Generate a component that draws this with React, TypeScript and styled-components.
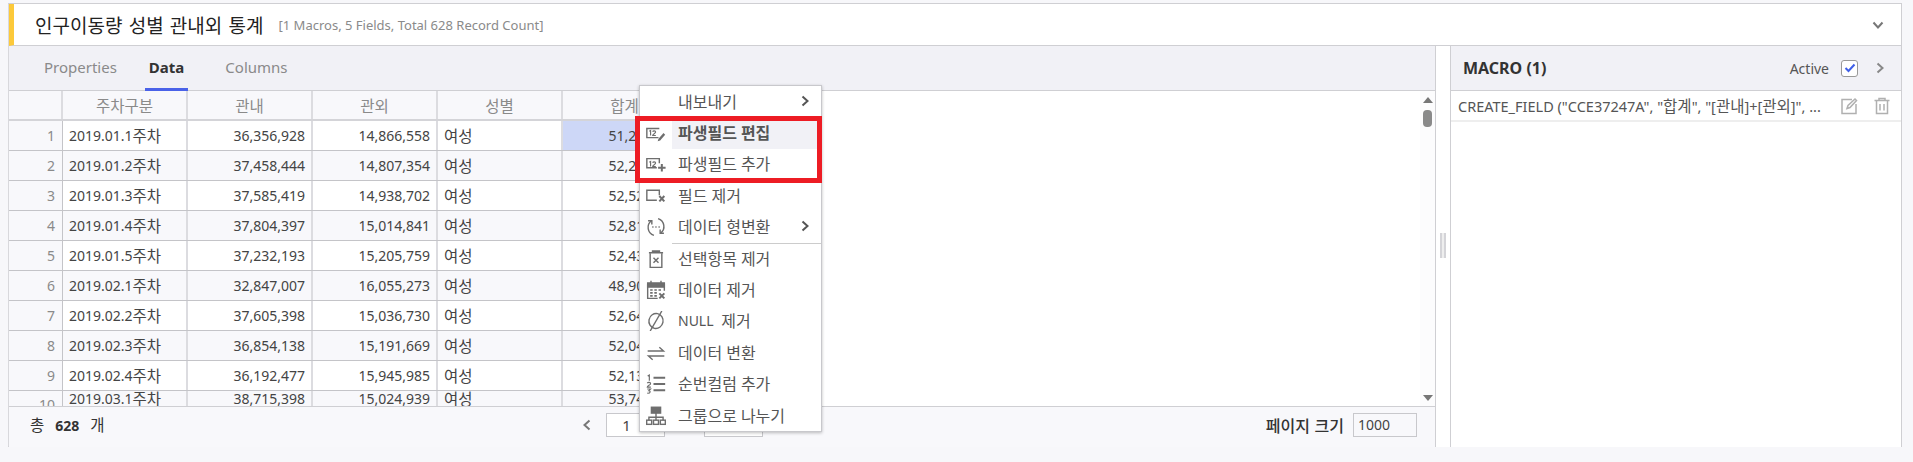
import React from "react";
import styled, { createGlobalStyle } from "styled-components";

const GlobalStyle = createGlobalStyle`
  * { box-sizing: border-box; }
  html, body { margin: 0; padding: 0; height: 100%; background: #f7f7fa; overflow: hidden; }
  body { font-family: "Noto Sans", "Noto Sans CJK KR", sans-serif; font-size: 14px; color: #444; }
`;

const rows = [
  ["2019.01.1주차", 36356928, 14866558],
  ["2019.01.2주차", 37458444, 14807354],
  ["2019.01.3주차", 37585419, 14938702],
  ["2019.01.4주차", 37804397, 15014841],
  ["2019.01.5주차", 37232193, 15205759],
  ["2019.02.1주차", 32847007, 16055273],
  ["2019.02.2주차", 37605398, 15036730],
  ["2019.02.3주차", 36854138, 15191669],
  ["2019.02.4주차", 36192477, 15945985],
  ["2019.03.1주차", 38715398, 15024939],
] as [string, number, number][];

// 한글만 글자 크기를 따로 준다
function Mixed({ children }: { children: string }) {
  return (
    <>
      {children.split(/([가-힣]+)/).map((part, i) =>
        /[가-힣]/.test(part) ? <Ko key={i}>{part}</Ko> : part
      )}
    </>
  );
}

const IconBox = styled.svg`
  display: block;
  fill: none;
  stroke: #6e6e6e;
  stroke-width: 1.7;
`;

const Twelve = () => (
  <path d="M4 10l1.500-1v6M8 10.500c.5-1.500 3.500-1.500 3.500.4 0 1.600-3.500 2.300-3.500 4.100h3.800" strokeWidth="1.400" />
);

const menuIcons: React.ReactNode[] = [
  null,
  <>
    <path d="M16 6.500H1v11h14" />
    <Twelve />
    <path d="M15 19l6-7 2 2-6 7-3 .8z" fill="#6e6e6e" stroke="none" />
  </>,
  <>
    <path d="M16 11V5.500H1v11h12" />
    <Twelve />
    <path d="M19 12v9M14.500 16.500h9" strokeWidth="2.400" />
  </>,
  <>
    <path d="M16 11V5H1v12h12" />
    <path d="M16 12l6 6.500M22 12l-6 6.500" strokeWidth="2.400" />
  </>,
  <>
    <path d="M9.500 22A10 10 0 0 1 6.500 4.500" />
    <path d="M2.500 4.500h4.500V9" />
    <path d="M14.500 2A10 10 0 0 1 17.500 19.500" />
    <path d="M21.500 19.500H17V15" />
    <path d="M7.500 12h1.500M11.200 12h1.500M15 12h1.500" strokeWidth="2" />
  </>,
  <>
    <path d="M3.500 4.500h17M8 4.500V2.500h8v2" strokeWidth="2" />
    <path d="M5 5v17h14V5" />
    <path d="M9 10.500l6 6M15 10.500l-6 6" />
  </>,
  <>
    <path d="M2 5h20v8M2 5v17h12" />
    <path d="M2 3.500h20v5H2z" fill="#6e6e6e" />
    <path d="M6 1v3M18 1v3" />
    <path d="M5 12h3M10 12h3M15 12h3M5 15.500h3M10 15.500h3M5 19h3M10 19h3" strokeWidth="2" />
    <path d="M16 16l6 6M22 16l-6 6" strokeWidth="2.400" />
  </>,
  <>
    <ellipse cx="12" cy="12" rx="8.500" ry="9" transform="rotate(12 12 12)" />
    <path d="M5 24L19 0" />
  </>,
  <>
    <path d="M2 9.500h19l-5-4.500" />
    <path d="M22 15.500H3l5 4.500" />
  </>,
  <>
    <path d="M9 4.500h14M9 12h14M9 19.500h14" strokeWidth="2.200" />
    <path d="M2 2.500l2-1.200V8M1.500 11c1-1.400 4-1.200 4 .6s-4 2.300-4 4.200h4.300M1.500 18h4l-2 2c2 0 2.300 3.500-2 3" strokeWidth="1.400" />
  </>,
  <>
    <rect x="6.500" y="1.500" width="11" height="7" fill="#6e6e6e" />
    <path d="M12 8.500v5M3.500 17v-3.500h17V17M12 13.500V17" />
    <rect x=".8" y="17" width="6" height="5" />
    <rect x="9" y="17" width="6" height="5" />
    <rect x="17.200" y="17" width="6" height="5" />
  </>,
];

const menuItems = [
  { label: "내보내기", arrow: true },
  { label: "파생필드 편집", bold: true, active: true },
  { label: "파생필드 추가" },
  { label: "필드 제거" },
  { label: "데이터 형변환", arrow: true },
  { label: "선택항목 제거", line: true },
  { label: "데이터 제거" },
  { label: "NULL 제거" },
  { label: "데이터 변환" },
  { label: "순번컬럼 추가" },
  { label: "그룹으로 나누기" },
];

const Chevron = ({ dir, color = "#777" }: { dir: "left" | "right" | "down"; color?: string }) => {
  const d = { left: "M9.500 2.500L4.500 7l5 4.500", right: "M4.500 2.500L9.500 7l-5 4.500", down: "M2.500 4.500L7 9.500l4.500-5" }[dir];
  return (
    <svg width="14" height="14" viewBox="0 0 14 14" fill="none" stroke={color} strokeWidth="2">
      <path d={d} />
    </svg>
  );
};

export default function App() {
  return (
    <Frame>
      <GlobalStyle />
      <TitleBar>
        <Title>인구이동량 성별 관내외 통계</Title>
        <Summary>[1 Macros, 5 Fields, Total 628 Record Count]</Summary>
        <TitleToggle>
          <Chevron dir="down" />
        </TitleToggle>
      </TitleBar>
      <Body>
        <DataPane>
          <Tabs>
            <Tab>Properties</Tab>
            <Tab $active>Data</Tab>
            <Tab $last>Columns</Tab>
          </Tabs>
          <TableArea>
            <Grid>
              <HeadRow>
                <HeadCell />
                <HeadCell>주차구분</HeadCell>
                <HeadCell>관내</HeadCell>
                <HeadCell>관외</HeadCell>
                <HeadCell>성별</HeadCell>
                <HeadCell>합계</HeadCell>
              </HeadRow>
              {rows.map(([week, inner, outer], i) => (
                <DataRow key={week} $even={i % 2 === 1} $clipped={i === 9}>
                  <NumCell $clipped={i === 9}>{i + 1}</NumCell>
                  <Cell>
                    <Mixed>{week}</Mixed>
                  </Cell>
                  <Cell $right>{inner.toLocaleString("en-US")}</Cell>
                  <Cell $right>{outer.toLocaleString("en-US")}</Cell>
                  <Cell>
                    <Ko>여성</Ko>
                  </Cell>
                  <Cell $right $selected={i === 0}>
                    {(inner + outer).toLocaleString("en-US")}
                  </Cell>
                </DataRow>
              ))}
            </Grid>
            <ScrollBar>
              <ArrowUp />
              <Thumb />
              <ArrowDown />
            </ScrollBar>
          </TableArea>
          <Footer>
            <Total>
              <Ko>총</Ko>
              <b>628</b>
              <Ko>개</Ko>
            </Total>
            <Pager>
              <Chevron dir="left" />
              <PageBox>1</PageBox>
              <PageSlash>/</PageSlash>
              <PageBox />
            </Pager>
            <PageSize>
              <PageSizeLabel>페이지 크기</PageSizeLabel>
              <SizeBox>1000</SizeBox>
            </PageSize>
          </Footer>
        </DataPane>
        <Splitter>
          <Grip />
        </Splitter>
        <MacroPane>
          <MacroHead>
            <MacroTitle>MACRO (1)</MacroTitle>
            <ActiveLabel>Active</ActiveLabel>
            <CheckBox>
              <svg width="12" height="12" viewBox="0 0 12 12" fill="none" stroke="#3f5fe8" strokeWidth="2">
                <path d="M1.500 6l3 3 6-6.500" />
              </svg>
            </CheckBox>
            <Chevron dir="right" color="#888" />
          </MacroHead>
          <MacroRow>
            <MacroText>
              <Mixed>{'CREATE_FIELD ("CCE37247A", "합계", "[관내]+[관외]", ...'}</Mixed>
            </MacroText>
            <RowIcon width="18" height="18" viewBox="0 0 18 18">
              <path d="M12 2.500H2v14h14V7" />
              <path d="M7 11.500l1-3 7-6.500 1.500 1.500-6.500 7z" />
            </RowIcon>
            <RowIcon width="18" height="18" viewBox="0 0 18 18">
              <path d="M1.500 3.500h15M6 3.500V1.500h6v2M3.500 3.500v13h11v-13M7 7v6.500M11 7v6.500" />
            </RowIcon>
          </MacroRow>
        </MacroPane>
      </Body>
      <Menu>
        {menuItems.map((item, i) => (
          <MenuItem key={item.label} $line={item.line}>
            <MenuIcon>
              {menuIcons[i] && (
                <IconBox width="20" height="20" viewBox="0 0 24 24">
                  {menuIcons[i]}
                </IconBox>
              )}
            </MenuIcon>
            <MenuLabel $bold={item.bold} $active={item.active}>
              <Mixed>{item.label}</Mixed>
              {item.arrow && (
                <MenuArrow>
                  <Chevron dir="right" color="#555" />
                </MenuArrow>
              )}
            </MenuLabel>
          </MenuItem>
        ))}
        <Highlight />
      </Menu>
    </Frame>
  );
}

const Ko = styled.span`
  font-family: "Noto Sans CJK KR", sans-serif;
  font-size: 15.5px;
  line-height: 1;
`;

const Frame = styled.div`
  position: relative;
  width: 1894px;
  height: 444px;
  margin: 3px 0 0 8px;
  border: 1px solid #cfcfd3;
  border-left-color: #d8d8dc;
  background: #fff;
`;

const TitleBar = styled.header`
  display: flex;
  align-items: center;
  height: 42px;
  padding: 0 16px 0 21px;
  border-left: 5px solid #fcc93a;
  border-bottom: 1px solid #cfcfd3;
  background: #fff;
`;

const Title = styled.h1`
  margin: 0;
  font-family: "Noto Sans CJK KR", sans-serif;
  font-size: 19px;
  font-weight: 400;
  word-spacing: 2px;
  color: #222;
`;

const Summary = styled.span`
  margin-left: 15px;
  font-size: 13px;
  color: #8a8a8a;
`;

const TitleToggle = styled.span`
  margin-left: auto;
  display: flex;
`;

const Body = styled.div`
  display: flex;
  height: 401px;
`;

const DataPane = styled.section`
  display: flex;
  flex-direction: column;
  width: 1427px;
  border-right: 1px solid #cfcfd3;
  background: #f8f8fb;
`;

const Tabs = styled.nav`
  display: flex;
  gap: 32px;
  height: 45px;
  padding-left: 35px;
  border-bottom: 1px solid #cfcfd3;
  background: #f1f1f6;
`;

const Tab = styled.span<{ $active?: boolean; $last?: boolean }>`
  display: flex;
  align-items: center;
  height: 45px;
  padding: 0 ${({ $active }) => ($active ? "4px" : "0")};
  margin: 0 ${({ $active }) => ($active ? "-4px" : "0")};
  margin-left: ${({ $last, $active }) => ($last ? "9px" : $active ? "-4px" : "0")};
  font-size: 15px;
  font-weight: ${({ $active }) => ($active ? 700 : 400)};
  color: ${({ $active }) => ($active ? "#333" : "#8a8a8a")};
  border-bottom: 3px solid ${({ $active }) => ($active ? "#4a62e8" : "transparent")};
`;

const TableArea = styled.div`
  display: flex;
  height: 316px;
  border-bottom: 1px solid #cfcfd3;
  background: #fff;
`;

const Grid = styled.div`
  flex: 1;
  overflow: hidden;
`;

const columns = "54px repeat(5, 125px)";

const HeadRow = styled.div`
  display: grid;
  grid-template-columns: ${columns};
  width: 679px;
  height: 30px;
  background: #f8f8fb;
  border-bottom: 2px solid #d4d4d8;
`;

const HeadCell = styled.div`
  display: flex;
  align-items: center;
  justify-content: center;
  font-family: "Noto Sans CJK KR", sans-serif;
  font-size: 15.5px;
  color: #8a8a8a;
  border-right: 2px solid #dcdce0;
`;

const DataRow = styled.div<{ $even: boolean; $clipped: boolean }>`
  display: grid;
  grid-template-columns: ${columns};
  grid-template-rows: ${({ $clipped }) => ($clipped ? "15px" : "29px")};
  width: 679px;
  height: ${({ $clipped }) => ($clipped ? "16px" : "30px")};
  background: ${({ $even }) => ($even ? "#f8f8fb" : "#fff")};
  border-bottom: ${({ $clipped }) => ($clipped ? "0" : "1px solid #c4c4c8")};
  overflow: hidden;
`;

// 잘린 마지막 행은 번호만 아래로 밀려 있다
const NumCell = styled.div<{ $clipped: boolean }>`
  display: flex;
  align-items: center;
  justify-content: flex-end;
  height: ${({ $clipped }) => ($clipped ? "26px" : "auto")};
  padding-right: 7px;
  color: #8a8a8a;
  background: #f8f8fb;
  border-right: 1px solid #c4c4c8;
`;

const Cell = styled.div<{ $right?: boolean; $selected?: boolean }>`
  display: flex;
  align-items: center;
  justify-content: ${({ $right }) => ($right ? "flex-end" : "flex-start")};
  padding: 0 6px;
  white-space: nowrap;
  overflow: hidden;
  background: ${({ $selected }) => ($selected ? "#cdd7f7" : "transparent")};
  border-right: 2px solid #dcdce0;
`;

const ScrollBar = styled.div`
  display: flex;
  flex-direction: column;
  align-items: center;
  width: 15px;
  padding: 6px 0 5px;
  background: #fcfcfd;
`;

const ArrowUp = styled.span`
  border: 5px solid transparent;
  border-top: 0;
  border-bottom: 6px solid #777;
  margin-left: 1px;
`;

const ArrowDown = styled.span`
  margin-top: auto;
  border: 5px solid transparent;
  border-bottom: 0;
  border-top: 6px solid #777;
`;

const Thumb = styled.span`
  width: 9px;
  height: 17px;
  margin-top: 7px;
  border-radius: 4px;
  background: #8a8a8a;
`;

const Footer = styled.footer`
  display: flex;
  align-items: center;
  flex: 1;
  padding: 0 18px 4px 21px;
  background: #f8f8fb;
`;

const Total = styled.div`
  display: flex;
  align-items: center;
  gap: 11px;
  width: 550px;
  color: #333;

  b {
    font-weight: 700;
  }
`;

const Pager = styled.div`
  display: flex;
  align-items: center;
`;

const PageBox = styled.div`
  width: 59px;
  height: 24px;
  margin-left: 12px;
  border: 1px solid #c8c8cc;
  background: #fff;
  font-size: 15px;
  line-height: 22px;
  text-align: center;
  padding-right: 18px;
  color: #444;
`;

const PageSlash = styled.span`
  margin: 0 10px 0 5px;
  width: 12px;
  color: #333;
`;

const PageSize = styled.div`
  display: flex;
  align-items: center;
  gap: 9px;
  margin-left: auto;
`;

const PageSizeLabel = styled.span`
  font-family: "Noto Sans CJK KR", sans-serif;
  font-size: 16px;
  font-weight: 500;
  word-spacing: 1px;
  color: #333;
`;

const SizeBox = styled.div`
  width: 64px;
  height: 24px;
  padding-left: 4px;
  border: 1px solid #c8c8cc;
  line-height: 22px;
  color: #444;
`;

const Splitter = styled.div`
  display: flex;
  align-items: flex-start;
  justify-content: center;
  width: 14px;
  padding-top: 187px;
  background: #fff;
`;

const Grip = styled.span`
  width: 6px;
  height: 25px;
  background: linear-gradient(90deg, #d4d4d8 0 33%, #eee 33% 66%, #d4d4d8 66%);
`;

const MacroPane = styled.aside`
  flex: 1;
  border-left: 1px solid #cfcfd3;
  background: #fff;
`;

const MacroHead = styled.div`
  display: flex;
  align-items: center;
  height: 45px;
  padding: 0 14px 0 12px;
  border-bottom: 1px solid #cfcfd3;
  background: #f1f1f6;
`;

const MacroTitle = styled.strong`
  font-size: 16px;
  color: #333;
  margin-right: auto;
`;

const ActiveLabel = styled.span`
  color: #555;
`;

const CheckBox = styled.span`
  display: flex;
  align-items: center;
  justify-content: center;
  width: 17px;
  height: 17px;
  margin: 0 15px 0 12px;
  border: 1px solid #999;
  border-radius: 3px;
  background: #fff;
`;

const MacroRow = styled.div`
  display: flex;
  align-items: center;
  gap: 15px;
  height: 31px;
  padding: 0 10px 0 7px;
  border-bottom: 2px solid #eee;
`;

const MacroText = styled.span`
  flex: 1;
  font-size: 14.5px;
  white-space: nowrap;
  color: #555;
`;

const RowIcon = styled.svg`
  fill: none;
  stroke: #b0b0b0;
  stroke-width: 1.500;
`;

const Menu = styled.div`
  position: absolute;
  left: 630px;
  top: 81px;
  width: 183px;
  height: 347px;
  border: 1px solid #c8c8cc;
  background: #fff;
  box-shadow: 0 1px 3px rgba(0, 0, 0, 0.25);
`;

const MenuItem = styled.div<{ $line?: boolean }>`
  display: flex;
  height: 31.400px;
  position: relative;

  ${({ $line }) =>
    $line &&
    `&::before {
      content: "";
      position: absolute;
      left: 32px;
      right: 0;
      top: 0;
      border-top: 1px solid #ccc;
    }`}
`;

const MenuIcon = styled.span`
  display: flex;
  align-items: center;
  justify-content: center;
  width: 32px;
`;

const MenuLabel = styled.span<{ $bold?: boolean; $active?: boolean }>`
  display: flex;
  align-items: center;
  flex: 1;
  gap: 4px;
  padding: 0 0 2px 6px;
  white-space: pre;
  color: #555;
  font-weight: ${({ $bold }) => ($bold ? 700 : 400)};
  background: ${({ $active }) => ($active ? "#f1f1f6" : "transparent")};

  ${Ko} {
    font-size: 16px;
  }
`;

const MenuArrow = styled.span`
  position: absolute;
  right: 9px;
  display: flex;
`;

const Highlight = styled.div`
  position: absolute;
  left: -5px;
  top: 30px;
  width: 187px;
  height: 67px;
  border: 5px solid #ed1c24;
  pointer-events: none;
`;
